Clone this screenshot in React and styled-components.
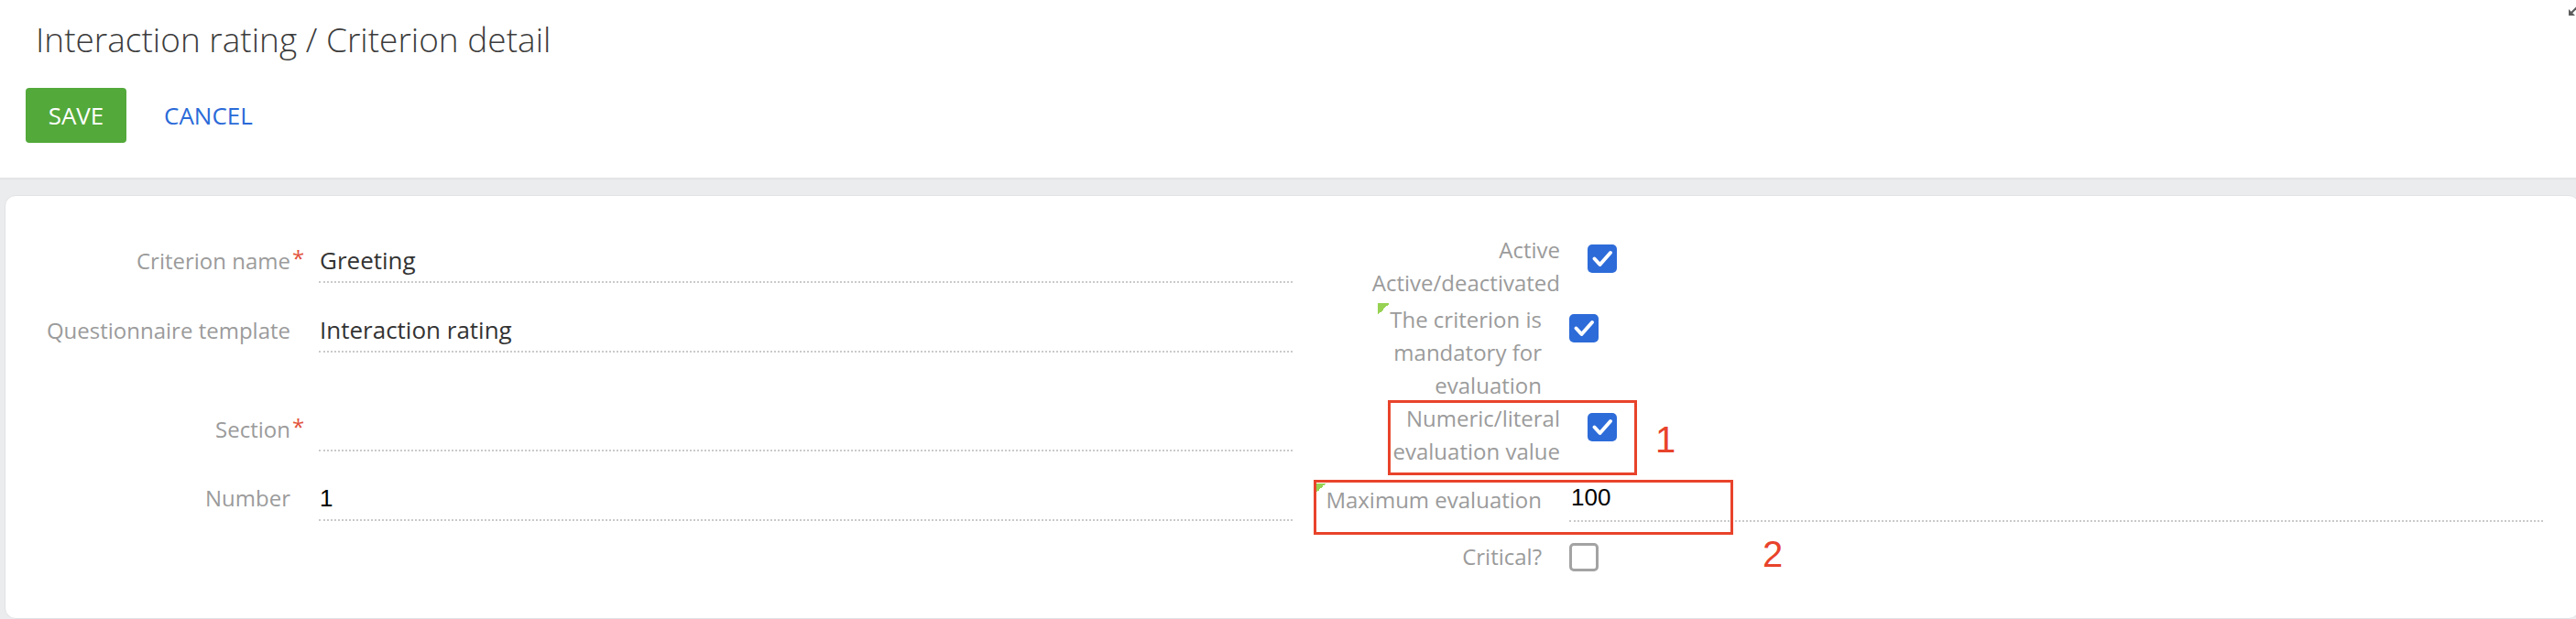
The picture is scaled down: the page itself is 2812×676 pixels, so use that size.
import React from "react";
import styled, { createGlobalStyle } from "styled-components";

const GlobalStyle = createGlobalStyle`
  html, body {
    margin: 0;
    padding: 0;
    background: #ebecee;
    overflow: hidden;
  }
  body {
    font-family: "Open Sans", "Liberation Sans", sans-serif;
  }
`;

const App = () => {
  return (
    <Page>
      <GlobalStyle />
      <Header>
        <Title>Interaction rating / Criterion detail</Title>
        <Toolbar>
          <SaveButton>SAVE</SaveButton>
          <CancelButton>CANCEL</CancelButton>
        </Toolbar>
        <CollapseIcon viewBox="0 0 12 12">
          <path d="M11 1 L4 8" stroke="#5c5c5c" strokeWidth="2.2" />
          <path d="M1 4 L1 11 L8 11 Z" fill="#5c5c5c" />
        </CollapseIcon>
      </Header>

      <Content>
        <Card>
          <Form>
            <LeftColumn>
              <FieldRow>
                <FieldLabel>
                  <span>
                    Criterion name<Required>*</Required>
                  </span>
                </FieldLabel>
                <FieldValue>Greeting</FieldValue>
              </FieldRow>
              <FieldRow $space={33}>
                <FieldLabel>
                  <span>Questionnaire template</span>
                </FieldLabel>
                <FieldValue>Interaction rating</FieldValue>
              </FieldRow>
              <FieldRow $space={65}>
                <FieldLabel>
                  <span>
                    Section<Required>*</Required>
                  </span>
                </FieldLabel>
                <FieldValue>&nbsp;</FieldValue>
              </FieldRow>
              <FieldRow $space={33}>
                <FieldLabel>
                  <span>Number</span>
                </FieldLabel>
                <FieldValue $input>1</FieldValue>
              </FieldRow>
            </LeftColumn>

            <RightColumn>
              <OptionRow $indent={36}>
                <OptionLabel>Active Active/deactivated</OptionLabel>
                <Checkbox checked />
              </OptionRow>
              <OptionRow $indent={16} $space={4}>
                <OptionLabel>
                  <Hint />
                  The criterion is mandatory for evaluation
                </OptionLabel>
                <Checkbox checked />
              </OptionRow>
              <OptionRow $indent={36}>
                <OptionLabel>Numeric/literal evaluation value</OptionLabel>
                <Checkbox checked />
                <Mark $left={104} $top={-2} $width={272} $height={82} />
                <MarkNumber $left={396} $top={21}>1</MarkNumber>
              </OptionRow>
              <OptionRow $indent={16} $space={17}>
                <OptionLabel>
                  <Hint />
                  Maximum evaluation
                </OptionLabel>
                <OptionValue>100</OptionValue>
                <Mark $left={23} $top={-4} $width={458} $height={60} />
                <MarkNumber $left={513} $top={57}>2</MarkNumber>
              </OptionRow>
              <OptionRow $indent={16} $space={20} $center>
                <OptionLabel>Critical?</OptionLabel>
                <Checkbox centered />
              </OptionRow>
            </RightColumn>
          </Form>
        </Card>
      </Content>
    </Page>
  );
};

const Checkbox = ({ checked, centered }) => (
  <Box $checked={checked} $centered={centered}>
    {checked && (
      <svg width="32" height="31" viewBox="0 0 32 31">
        <path
          d="M7.5 15.5 L13.5 22 L25 9"
          fill="none"
          stroke="#fff"
          strokeWidth="4"
          strokeLinecap="round"
          strokeLinejoin="round"
        />
      </svg>
    )}
  </Box>
);

const Page = styled.div`
  min-height: 676px;
`;

const Header = styled.header`
  position: relative;
  background: #fff;
  padding: 21px 0 38px 28px;
  border-bottom: 2px solid #e3e4e6;
`;

const Title = styled.h1`
  margin: 0 0 0 11px;
  font-size: 37px;
  font-weight: 300;
  line-height: 44px;
  color: #3c3c3c;
`;

const Toolbar = styled.div`
  display: flex;
  gap: 17px;
  margin-top: 31px;
`;

const SaveButton = styled.button`
  width: 110px;
  height: 60px;
  border: none;
  border-radius: 4px;
  background: #53a93a;
  color: #fff;
  font-family: "Open Sans", sans-serif;
  font-size: 26px;
  line-height: 60px;
  padding: 0;
  cursor: pointer;
`;

const CancelButton = styled.button`
  height: 60px;
  border: none;
  background: transparent;
  color: #2a6ad8;
  font-family: "Open Sans", sans-serif;
  font-size: 26px;
  line-height: 60px;
  padding: 0 24px;
  cursor: pointer;
`;

const CollapseIcon = styled.svg`
  position: absolute;
  top: 6px;
  right: -3px;
  width: 12px;
  height: 12px;
`;

const Content = styled.main`
  padding-top: 17px;
`;

const Card = styled.section`
  box-sizing: border-box;
  height: 463px;
  margin: 0 -4px 0 5px;
  background: #fff;
  border: 1px solid #e1e2e4;
  border-radius: 12px;
`;

const Form = styled.div`
  display: grid;
  grid-template-columns: 1405px 1fr;
  padding-right: 39px;
`;

const LeftColumn = styled.div`
  display: flex;
  flex-direction: column;
  padding-top: 52px;
`;

const FieldRow = styled.div`
  display: grid;
  grid-template-columns: 342px 1fr;
  align-items: baseline;
  margin-top: ${(p) => p.$space || 0}px;
`;

const FieldLabel = styled.label`
  text-align: right;
  padding-right: 31px;
  font-size: 24px;
  line-height: 36px;
  color: #9b9b9b;

  span {
    position: relative;
  }
`;

const Required = styled.i`
  position: absolute;
  left: 100%;
  top: -4px;
  margin-left: 2px;
  font-style: normal;
  color: #e2533c;
`;

const FieldValue = styled.div`
  font-family: ${(p) =>
    p.$input ? '"Liberation Sans", Arial, sans-serif' : '"Open Sans", sans-serif'};
  font-size: 26px;
  line-height: 36px;
  color: ${(p) => (p.$input ? "#000" : "#333")};
  padding: 0 0 5px 1px;
  border-bottom: 2px dotted #cacaca;
`;

const RightColumn = styled.div`
  display: flex;
  flex-direction: column;
  padding-top: 41px;
`;

const OptionRow = styled.div`
  position: relative;
  display: flex;
  align-items: ${(p) => (p.$center ? "center" : "flex-start")};
  gap: 30px;
  padding-left: ${(p) => p.$indent}px;
  margin-top: ${(p) => p.$space || 0}px;
`;

const OptionLabel = styled.label`
  flex: none;
  width: 256px;
  text-align: right;
  font-size: 24px;
  line-height: 36px;
  color: #9b9b9b;
`;

const Hint = styled.span`
  display: inline-block;
  vertical-align: top;
  width: 13px;
  height: 13px;
  background: linear-gradient(to bottom right, #97d253 50%, transparent 50%);
`;

const Box = styled.span`
  box-sizing: border-box;
  flex: none;
  display: block;
  width: 32px;
  height: 31px;
  margin-top: ${(p) => (p.$centered ? 0 : 12)}px;
  border-radius: 5px;
  background: ${(p) => (p.$checked ? "#2d6bd9" : "#fff")};
  border: ${(p) => (p.$checked ? "none" : "3px solid #a3a3a3")};

  svg {
    display: block;
  }
`;

const OptionValue = styled.div`
  flex: 1;
  margin-top: -3px;
  padding: 0 0 7px 2px;
  font-family: "Liberation Sans", Arial, sans-serif;
  font-size: 26px;
  line-height: 36px;
  color: #000;
  border-bottom: 2px dotted #cacaca;
`;

const Mark = styled.div`
  position: absolute;
  box-sizing: border-box;
  left: ${(p) => p.$left}px;
  top: ${(p) => p.$top}px;
  width: ${(p) => p.$width}px;
  height: ${(p) => p.$height}px;
  border: 3px solid #e8432b;
  pointer-events: none;
`;

const MarkNumber = styled.span`
  position: absolute;
  left: ${(p) => p.$left}px;
  top: ${(p) => p.$top}px;
  font-family: "Liberation Sans", Arial, sans-serif;
  font-size: 40px;
  line-height: 40px;
  color: #e8432b;
`;

export default App;
